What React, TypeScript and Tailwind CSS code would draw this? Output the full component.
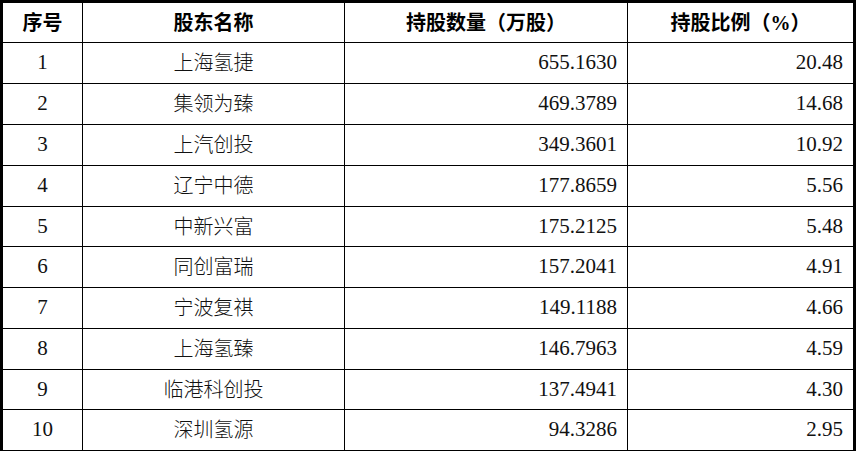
import React from "react";

const rows: [string, string, string, string][] = [
  ["1", "上海氢捷", "655.1630", "20.48"],
  ["2", "集领为臻", "469.3789", "14.68"],
  ["3", "上汽创投", "349.3601", "10.92"],
  ["4", "辽宁中德", "177.8659", "5.56"],
  ["5", "中新兴富", "175.2125", "5.48"],
  ["6", "同创富瑞", "157.2041", "4.91"],
  ["7", "宁波复祺", "149.1188", "4.66"],
  ["8", "上海氢臻", "146.7963", "4.59"],
  ["9", "临港科创投", "137.4941", "4.30"],
  ["10", "深圳氢源", "94.3286", "2.95"],
];

const heights = [
  "h-[41px]",
  "h-[41px]",
  "h-[41px]",
  "h-[41px]",
  "h-[40px]",
  "h-[41px]",
  "h-[41px]",
  "h-[41px]",
  "h-[40px]",
  "h-[41px]",
];

export default function App() {
  return (
    <div className="w-[857px] h-[451px] bg-white">
      <div
        className="w-[856px] border-l-[3px] border-t-[3px] border-r-[3px] border-black text-black"
        style={{ fontFamily: "'Liberation Serif', 'Noto Sans CJK SC', serif" }}
      >
        <div className="flex h-[40px] border-b border-black font-bold text-[20px]">
          <div className="w-[80px] border-r border-black flex items-center justify-center">序号</div>
          <div className="w-[262px] border-r border-black flex items-center justify-center">股东名称</div>
          <div className="w-[283px] border-r border-black flex items-center justify-center">持股数量（万股）</div>
          <div className="w-[225px] flex items-center justify-center">持股比例（%）</div>
        </div>
        {rows.map((r, i) => (
          <div key={i} className={`flex ${heights[i]} border-b border-black text-[#111]`}>
            <div className="w-[80px] border-r border-black flex items-center justify-center text-[21px]">{r[0]}</div>
            <div className="w-[262px] border-r border-black flex items-center justify-center text-[20px] font-light">{r[1]}</div>
            <div className="w-[283px] border-r border-black flex items-center justify-end pr-[10px] text-[21px]">{r[2]}</div>
            <div className="w-[225px] flex items-center justify-end pr-[10px] text-[21px]">{r[3]}</div>
          </div>
        ))}
      </div>
    </div>
  );
}
